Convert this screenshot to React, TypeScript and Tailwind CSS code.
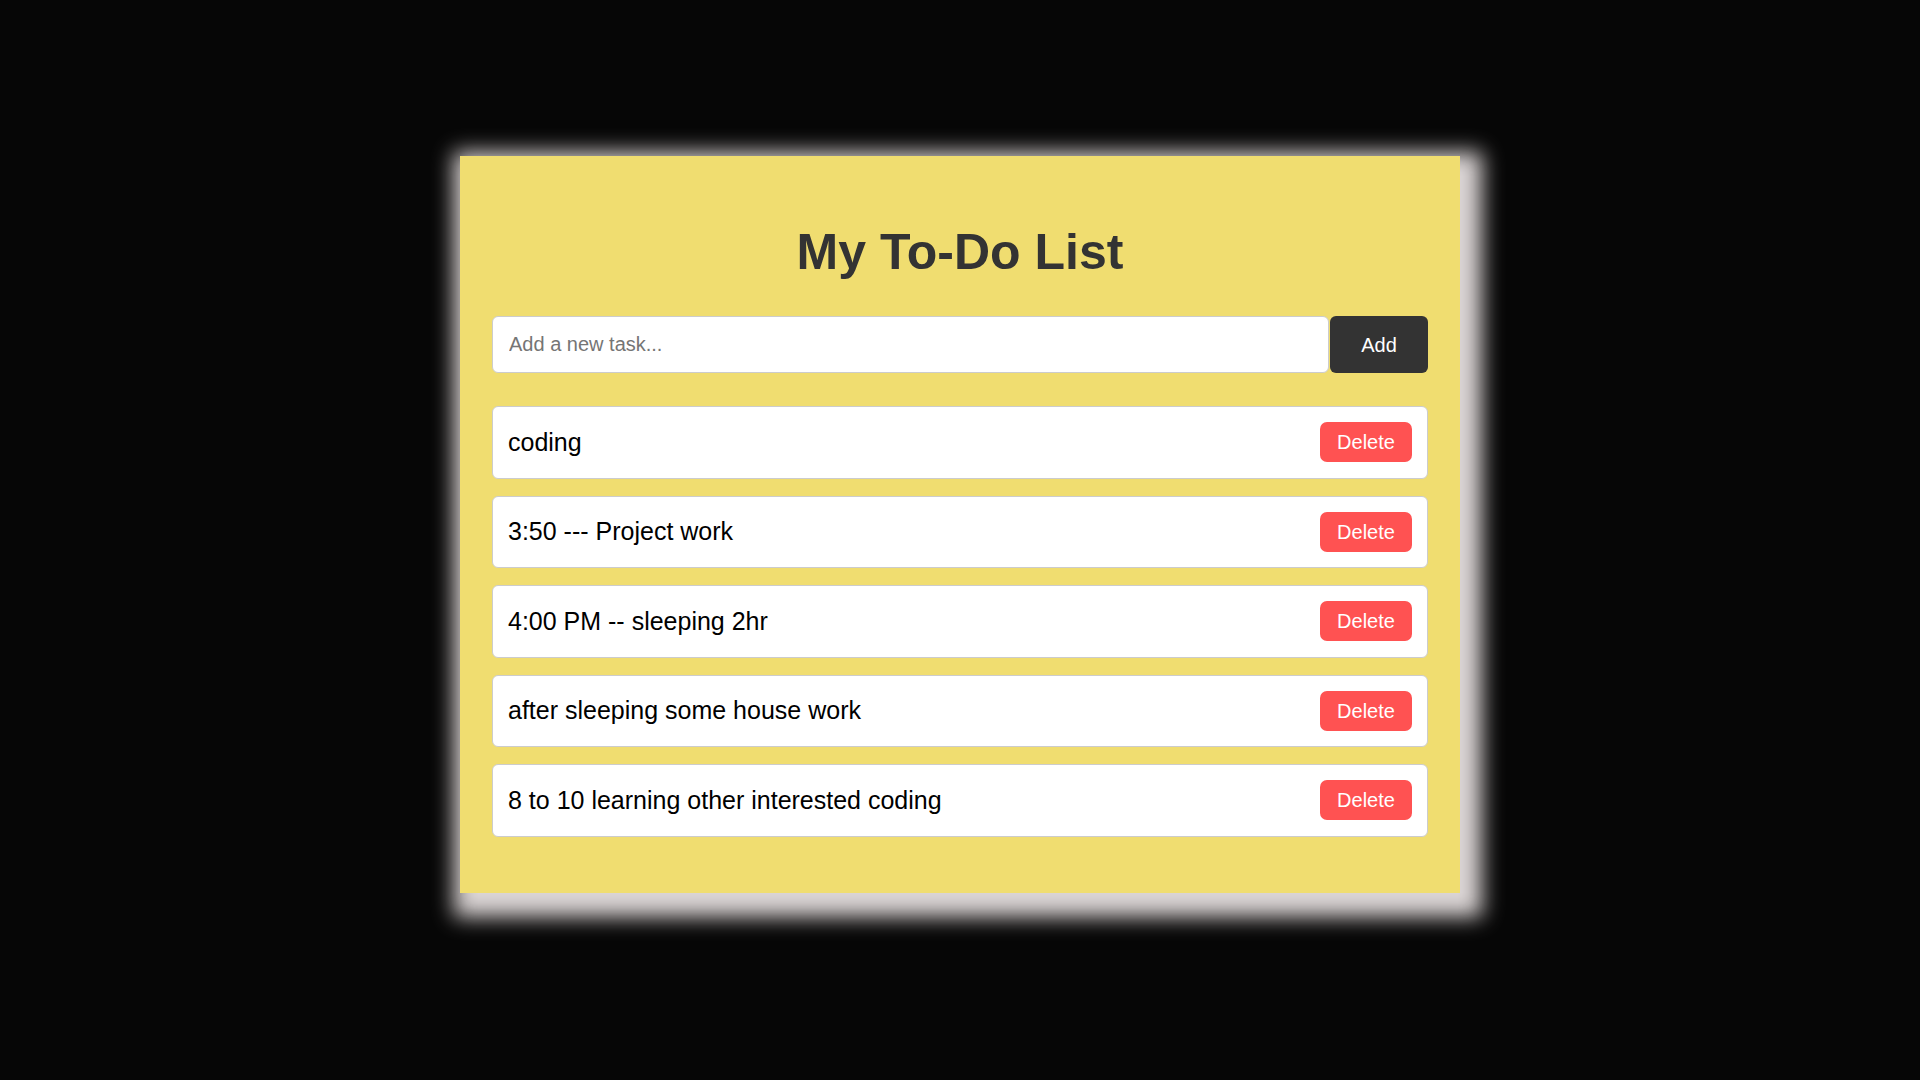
import React, { useState } from 'react';

const initialTasks = [
  'coding',
  '3:50 --- Project work',
  '4:00 PM -- sleeping 2hr',
  'after sleeping some house work',
  '8 to 10 learning other interested coding',
];

const App = () => {
  const [tasks, setTasks] = useState<string[]>(initialTasks);
  const [text, setText] = useState('');

  const addTask = () => {
    if (!text.trim()) return;
    setTasks([...tasks, text.trim()]);
    setText('');
  };

  return (
    <div
      className="w-full min-h-screen bg-[#060606] flex justify-center pt-[156px]"
      style={{ fontFamily: '"Liberation Sans", Arial, sans-serif' }}
    >
      {/* Card */}
      <div className="w-[1000px] h-[737px] bg-[#f0dd70] px-[32px] pt-[68px] shadow-[8px_10px_20px_14px_#dbd5d5]">
        <h1 className="text-[50px] leading-[56px] font-bold text-[#333333] text-center">
          My To-Do List
        </h1>

        {/* Input row */}
        <div className="flex mt-[36px] h-[57px]">
          <input
            value={text}
            onChange={(e) => setText(e.target.value)}
            placeholder="Add a new task..."
            className="flex-1 h-full bg-white border border-[#cccccc] rounded-[6px] px-[16px] text-[20px] text-black placeholder:text-[#757575] outline-none"
          />
          <button
            onClick={addTask}
            className="ml-px w-[98px] h-full bg-[#333333] text-white text-[20px] rounded-[6px]"
          >
            Add
          </button>
        </div>

        {/* Task list */}
        <ul className="mt-[33px] flex flex-col gap-[17px]">
          {tasks.map((task, i) => (
            <li
              key={`task-${i}`}
              className="h-[72.5px] bg-white border border-[#cccccc] rounded-[6px] pl-[15px] pr-[15px] flex items-center justify-between"
            >
              <span className="text-[25px] text-black">{task}</span>
              <button
                onClick={() => setTasks(tasks.filter((_, j) => j !== i))}
                className="w-[92px] h-[40px] bg-[#ff5252] text-white text-[20px] rounded-[7px]"
              >
                Delete
              </button>
            </li>
          ))}
        </ul>
      </div>
    </div>
  );
};

export default App;
